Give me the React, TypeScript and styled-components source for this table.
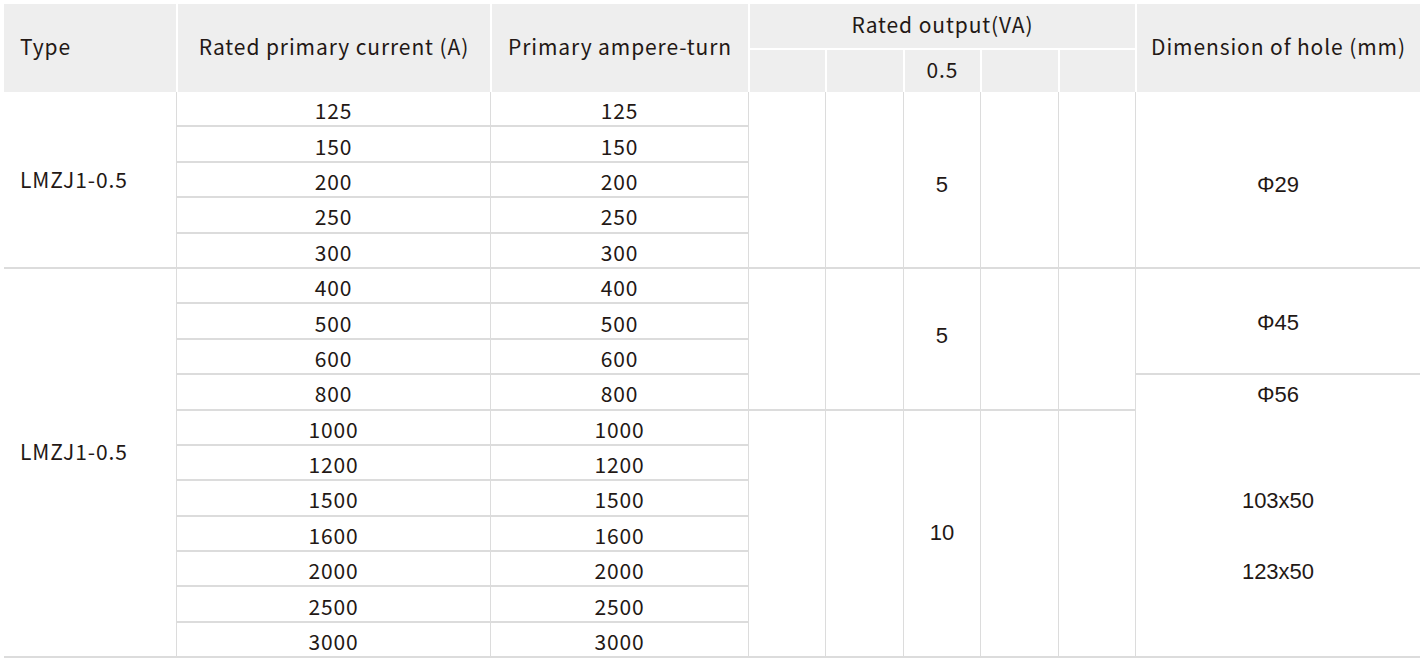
import React from "react";
import styled, { createGlobalStyle } from "styled-components";

const GlobalStyle = createGlobalStyle`
  html, body {
    margin: 0;
    padding: 0;
    background: #fff;
  }
  body {
    font-family: "Noto Sans CJK SC", "Noto Sans", sans-serif;
    color: #231815;
  }
`;

const Page = styled.div`
  padding: 4px 4px 0 4px;
`;

const SpecTable = styled.table`
  width: 1416px;
  table-layout: fixed;
  border-collapse: separate;
  border-spacing: 0;
  font-size: 21px;
  letter-spacing: 0.9px;
`;

const HeadCell = styled.th<{ $first?: boolean; $sub?: boolean; $left?: boolean }>`
  background: #eeeeee;
  font-weight: 400;
  text-align: ${(p) => (p.$left ? "left" : "center")};
  padding: 0 ${(p) => (p.$left ? "16px" : "0")} 4px;
  border-left: ${(p) => (p.$first ? "none" : "2px solid #fff")};
  border-top: ${(p) => (p.$sub ? "2px solid #fff" : "none")};
  white-space: nowrap;
`;

const HeadRow = styled.tr`
  height: 44px;
`;

const Row = styled.tr`
  height: 35.4px;
`;

// $dy nudges the text down (positive) or up (negative) inside its cell
const Cell = styled.td<{
  $first?: boolean;
  $left?: boolean;
  $arial?: boolean;
  $dy?: number;
}>`
  padding: ${(p) => Math.max(0, (p.$dy ?? 0) * 2)}px
    ${(p) => (p.$left ? "16px" : "0")}
    ${(p) => Math.max(0, -(p.$dy ?? 0) * 2)}px;
  text-align: ${(p) => (p.$left ? "left" : "center")};
  vertical-align: middle;
  border-bottom: 2px solid #dcdcdc;
  border-left: ${(p) => (p.$first ? "none" : "1px solid #dcdcdc")};
  font-family: ${(p) =>
    p.$arial ? `"Liberation Sans", Arial, sans-serif` : "inherit"};
  font-size: ${(p) => (p.$arial ? "22px" : "inherit")};
  letter-spacing: ${(p) => (p.$arial ? "0" : "inherit")};
  line-height: 1;
`;

const StackCell = styled(Cell)`
  vertical-align: top;
  padding: 0;
`;

const Stack = styled.div`
  display: flex;
  flex-direction: column;
`;

const StackLine = styled.div`
  height: 35.4px;
  box-sizing: border-box;
  padding-top: 4px;
  display: flex;
  align-items: center;
  justify-content: center;
`;

type Group = {
  type: string;
  rows: number[];
};

const groups: Group[] = [
  { type: "LMZJ1-0.5", rows: [125, 150, 200, 250, 300] },
  {
    type: "LMZJ1-0.5",
    rows: [400, 500, 600, 800, 1000, 1200, 1500, 1600, 2000, 2500, 3000],
  },
];

const OutputCells = ({
  span,
  value,
  dy,
}: {
  span: number;
  value: string;
  dy: number;
}) => (
  <>
    <Cell rowSpan={span} />
    <Cell rowSpan={span} />
    <Cell rowSpan={span} $arial $dy={dy}>
      {value}
    </Cell>
    <Cell rowSpan={span} />
    <Cell rowSpan={span} />
  </>
);

const App = () => {
  const [g1, g2] = groups;
  return (
    <Page>
      <GlobalStyle />
      <SpecTable>
        <colgroup>
          <col style={{ width: 172 }} />
          <col style={{ width: 314 }} />
          <col style={{ width: 258 }} />
          <col style={{ width: 77.4 }} />
          <col style={{ width: 77.4 }} />
          <col style={{ width: 77.4 }} />
          <col style={{ width: 77.4 }} />
          <col style={{ width: 77.4 }} />
          <col style={{ width: 285 }} />
        </colgroup>
        <thead>
          <HeadRow>
            <HeadCell rowSpan={2} $first $left>
              Type
            </HeadCell>
            <HeadCell rowSpan={2}>Rated primary current (A)</HeadCell>
            <HeadCell rowSpan={2}>Primary ampere-turn</HeadCell>
            <HeadCell colSpan={5}>Rated output(VA)</HeadCell>
            <HeadCell rowSpan={2}>Dimension of hole (mm)</HeadCell>
          </HeadRow>
          <HeadRow>
            <HeadCell $sub />
            <HeadCell $sub />
            <HeadCell $sub>0.5</HeadCell>
            <HeadCell $sub />
            <HeadCell $sub />
          </HeadRow>
        </thead>
        <tbody>
          {g1.rows.map((r, i) => (
            <Row key={`a${r}`}>
              {i === 0 && (
                <Cell rowSpan={g1.rows.length} $first $left>
                  {g1.type}
                </Cell>
              )}
              <Cell $dy={2}>{r}</Cell>
              <Cell $dy={2}>{r}</Cell>
              {i === 0 && (
                <>
                  <OutputCells span={g1.rows.length} value="5" dy={6} />
                  <Cell rowSpan={g1.rows.length} $arial $dy={6}>
                    Φ29
                  </Cell>
                </>
              )}
            </Row>
          ))}
          {g2.rows.map((r, i) => (
            <Row key={`b${r}`}>
              {i === 0 && (
                <Cell rowSpan={g2.rows.length} $first $left $dy={-11}>
                  {g2.type}
                </Cell>
              )}
              <Cell $dy={2}>{r}</Cell>
              <Cell $dy={2}>{r}</Cell>
              {i === 0 && (
                <>
                  <OutputCells span={4} value="5" dy={-3} />
                  <Cell rowSpan={3} $arial $dy={2}>
                    Φ45
                  </Cell>
                </>
              )}
              {i === 3 && (
                <StackCell rowSpan={8} $arial>
                  <Stack>
                    <StackLine>Φ56</StackLine>
                    <StackLine />
                    <StackLine />
                    <StackLine>103x50</StackLine>
                    <StackLine />
                    <StackLine>123x50</StackLine>
                  </Stack>
                </StackCell>
              )}
              {i === 4 && <OutputCells span={7} value="10" dy={0} />}
            </Row>
          ))}
        </tbody>
      </SpecTable>
    </Page>
  );
};

export default App;
